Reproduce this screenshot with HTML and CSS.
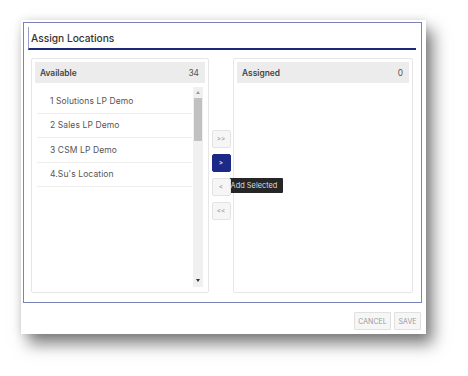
FILE: index.html
```html
<!DOCTYPE html>
<html>
<head>
<meta charset="utf-8">
<link rel="stylesheet" href="styles.css">
</head>
<body>
<div class="dialog">
  <div class="frame">
    <div class="title">Assign Locations</div>
    <div class="lists">
      <div class="panel panel-left">
        <div class="panel-head"><span>Available</span><span>34</span></div>
        <div class="list-wrap">
          <ul class="list">
            <li>1 Solutions LP Demo</li>
            <li>2 Sales LP Demo</li>
            <li>3 CSM LP Demo</li>
            <li>4.Su's Location</li>
          </ul>
          <div class="scrollbar">
            <span class="arrow up"></span>
            <span class="thumb"></span>
            <span class="arrow down"></span>
          </div>
        </div>
      </div>
      <div class="moves">
        <button class="mv">&gt;&gt;</button>
        <button class="mv active">&gt;
          <span class="tooltip">Add Selected</span>
        </button>
        <button class="mv">&lt;</button>
        <button class="mv">&lt;&lt;</button>
      </div>
      <div class="panel panel-right">
        <div class="panel-head"><span>Assigned</span><span>0</span></div>
      </div>
    </div>
  </div>
  <div class="footer">
    <button class="fbtn cancel">CANCEL</button>
    <button class="fbtn save">SAVE</button>
  </div>
</div>
</body>
</html>
```

FILE: styles.css
```css
* { box-sizing: border-box; }
html, body { margin: 0; padding: 0; background: #fff; }
body {
  font-family: Inter, "Noto Sans", sans-serif;
  width: 468px;
  height: 376px;
  overflow: hidden;
  padding: 20px 0 0 21px;
}
.dialog {
  width: 405px;
  height: 314px;
  background: #fff;
  padding: 2px;
  box-shadow: 0 0 8px rgba(0,0,0,0.10), 7px 10px 15px rgba(0,0,0,0.5);
}
.frame {
  width: 399px;
  height: 281px;
  border: 1px solid #7b82b8;
  padding: 4px 4px 0 4px;
}
.title {
  height: 23px;
  border-left: 1px solid #9aa0c8;
  border-bottom: 2px solid #1f2878;
  font-size: 10.2px;
  font-weight: 500;
  color: #333;
  padding: 5px 0 0 2px;
  margin-right: 1px;
}
.lists {
  display: flex;
  margin: 8px 3px 0 3px;
  height: 235px;
}
.panel {
  border: 1px solid #e6e6e6;
  border-radius: 2px;
  padding: 3px;
}
.panel-left { width: 178px; }
.panel-right { width: 180px; }
.panel-head {
  height: 21px;
  background: #ececec;
  display: flex;
  justify-content: space-between;
  align-items: center;
  padding: 0 6px 0 5px;
  font-size: 8.4px;
  color: #444;
}
.panel-head span:first-child { font-weight: 600; }
.panel-head span:last-child { color: #555; }
.list-wrap {
  display: flex;
  margin: 4px 2px 0 2px;
  height: 200px;
}
.list {
  list-style: none;
  margin: 2px 0 0 0;
  padding: 0;
  flex: 1;
}
.list li {
  height: 24.5px;
  border-bottom: 1px solid #eeeeee;
  font-size: 8.5px;
  letter-spacing: 0.1px;
  color: #555;
  padding-left: 13px;
  display: flex;
  align-items: center;
  margin-right: 1px;
}
.scrollbar {
  width: 10px;
  background: #f0f0f0;
  display: flex;
  flex-direction: column;
  align-items: center;
  position: relative;
}
.arrow {
  width: 0; height: 0;
  border-left: 2.5px solid transparent;
  border-right: 2.5px solid transparent;
}
.arrow.up { border-bottom: 3px solid #999; margin-top: 4px; }
.arrow.down { border-top: 3px solid #333; margin-top: auto; margin-bottom: 5px; }
.thumb {
  width: 8px;
  height: 43px;
  background: #c1c1c1;
  margin-top: 4px;
}
.moves {
  width: 24px;
  display: flex;
  flex-direction: column;
  align-items: center;
  padding-top: 72px;
  gap: 6px;
}
.mv {
  position: relative;
  width: 19px;
  height: 18px;
  padding: 0;
  border: 1px solid #e3e3e3;
  border-radius: 2px;
  background: #f6f6f6;
  color: #999;
  font-family: Inter, sans-serif;
  font-size: 6.5px;
  line-height: 16px;
  text-align: center;
}
.mv.active {
  background: #1b2a86;
  border-color: #1b2a86;
  color: #fff;
}
.tooltip {
  position: absolute;
  left: 13px;
  top: 23px;
  width: 57px;
  height: 15px;
  padding: 0 3px;
  background: #262626;
  color: #ddd;
  font-size: 7.4px;
  line-height: 15px;
  border-radius: 1px;
  white-space: nowrap;
  text-align: center;
}
.footer {
  display: flex;
  justify-content: flex-end;
  gap: 3px;
  padding: 9px 3px 0 0;
}
.fbtn {
  height: 18px;
  padding: 0;
  border: 1px solid #e0e0e0;
  border-radius: 1px;
  background: #f6f6f6;
  color: #9a9a9a;
  font-family: Inter, sans-serif;
  font-size: 7px;
}
.cancel { width: 37px; }
.save { width: 27px; }
```
